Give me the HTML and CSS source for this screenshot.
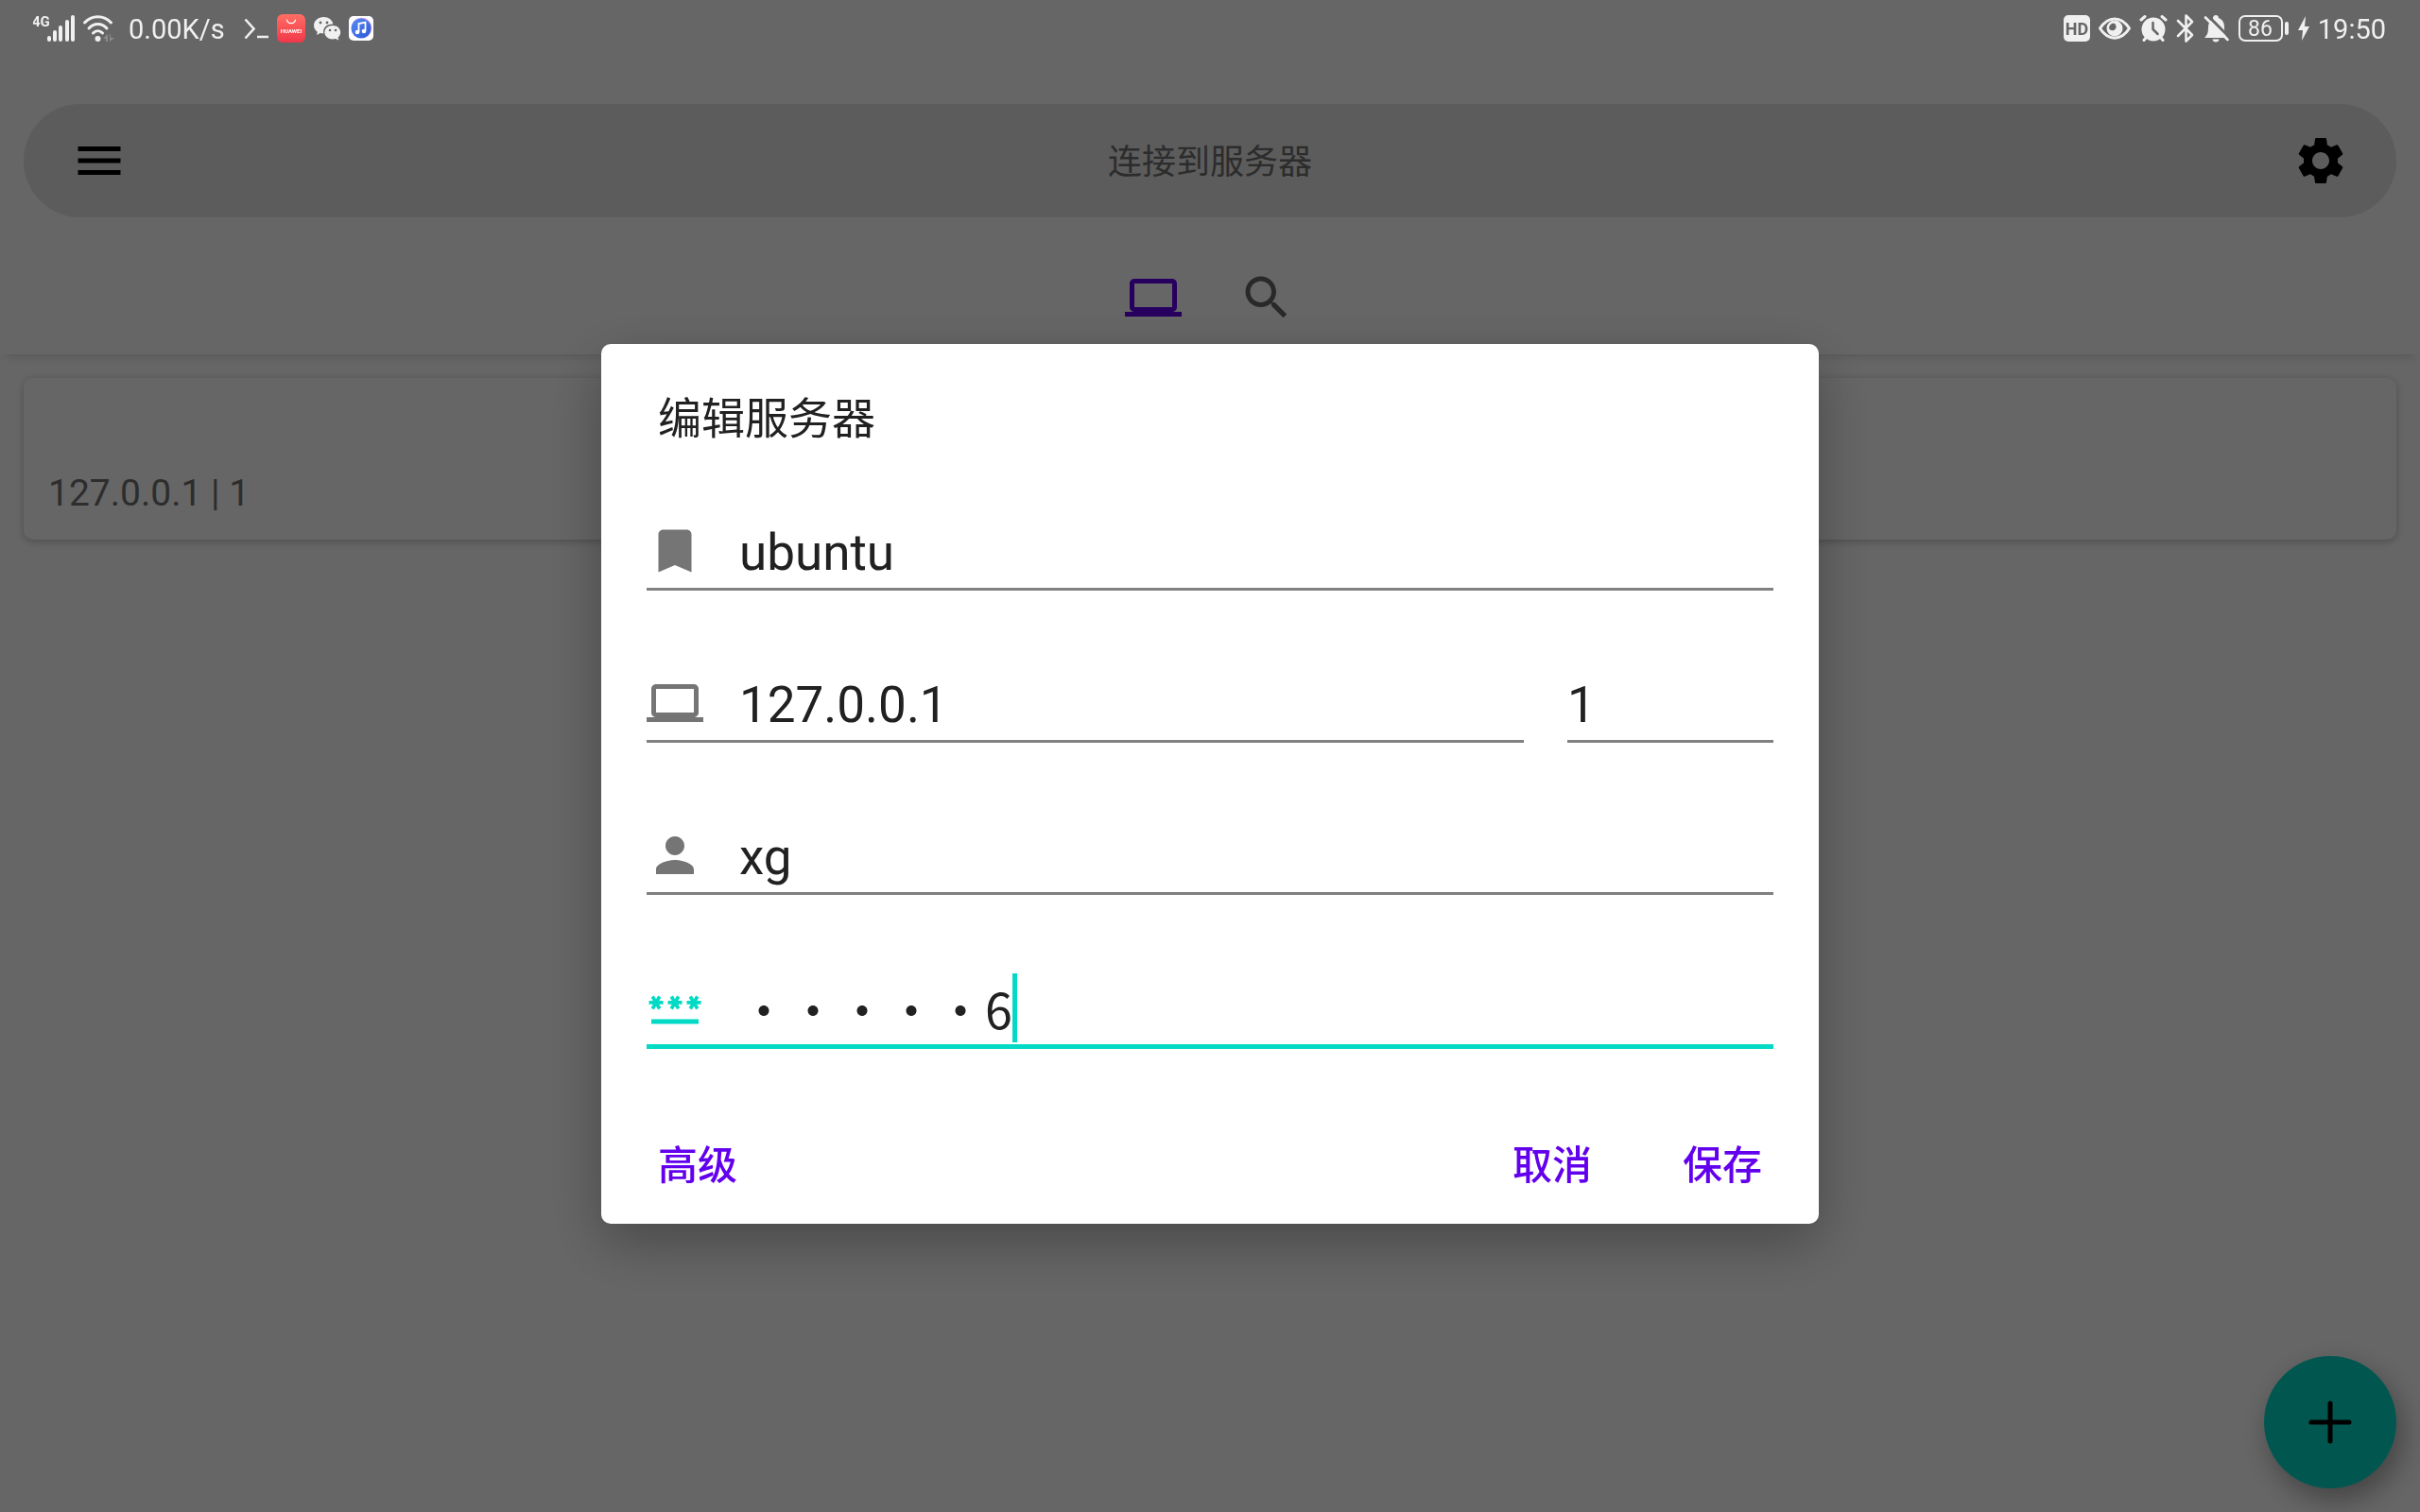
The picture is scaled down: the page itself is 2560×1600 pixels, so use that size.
FILE: index.html
```html
<!DOCTYPE html>
<html lang="zh-CN">
<head>
    <meta charset="UTF-8">
    <meta name="viewport" content="width=device-width, initial-scale=1.0">
    <title>连接到服务器</title>
    <link rel="stylesheet" href="styles.css">
</head>
<body>
    <div class="status-bar">
        <div class="status-left">
            <svg class="status-icon" width="44" height="32" viewBox="35 14 44 32" fill="#f0f0f0">
                <text class="network-type" x="34" y="28">4G</text>
                <rect x="50" y="38" width="4" height="6" rx="2"/>
                <rect x="56" y="32" width="4" height="12" rx="2"/>
                <rect x="62" y="27" width="4" height="17" rx="2"/>
                <rect x="69" y="21" width="4" height="23" rx="2"/>
                <rect x="75" y="16" width="4" height="28" rx="2"/>
            </svg>
            <svg class="status-icon wifi" width="34" height="32" viewBox="87 14 34 32" fill="none" stroke="#f0f0f0" stroke-width="3" stroke-linecap="round">
                <path d="M89.500 24C97 15.500 110 15.500 117.500 24"/>
                <path d="M94 30C99.500 24 107.500 24 113 30"/>
                <path d="M98.500 35C101.500 32 105.500 32 108.500 35"/>
                <circle cx="103.500" cy="41" r="3" fill="#f0f0f0" stroke="none"/>
                <path d="M114 36v8h-2v-3h-3zM116 44v-8h1v4h4z" fill="#8c8c8c" stroke="none"/>
            </svg>
            <span class="status-text speed">0.00K/s</span>
            <svg class="status-icon prompt" width="27" height="32" viewBox="257 14 27 32" fill="none" stroke="#f0f0f0" stroke-width="2.600">
                <path d="M258.500 20.500L267.500 30.500L258.500 40.500M271 39H283"/>
            </svg>
            <svg class="status-icon" width="30" height="32" viewBox="293 14 30 32">
                <defs>
                    <linearGradient id="storeRed" x1="0" y1="0" x2="0" y2="1">
                        <stop offset="0" stop-color="#ff6e63"/>
                        <stop offset="1" stop-color="#f0374a"/>
                    </linearGradient>
                </defs>
                <rect x="293" y="15" width="30" height="30" rx="6" fill="url(#storeRed)"/>
                <path d="M303.500 20.500C304 26 312 26 312.500 20.500" fill="none" stroke="#fff" stroke-width="1.200"/>
                <text class="store-name" x="308" y="34.500" text-anchor="middle">HUAWEI</text>
            </svg>
            <svg class="status-icon" width="30" height="32" viewBox="331 14 30 32" fill="#f0f0f0">
                <path d="M342.500 18C336.500 18 332 22 332 27c0 2.800 1.500 5.200 3.800 6.800L335 37l3.800-2c1.200.3 2.500.5 3.500.5C341 29 346 25 352.500 25.500C351.500 21 347.500 18 342.500 18z"/>
                <path d="M352 27c-5 0-8.600 3.200-8.600 7.200s3.600 7.200 8.600 7.200c1 0 2-.2 2.900-.5l3.500 1.600l-.8-2.900c1.600-1.300 2.600-3.200 2.600-5.400C360.200 30.200 357 27 352 27z"/>
                <circle cx="339" cy="24" r="1.400" fill="#666"/>
                <circle cx="346" cy="24" r="1.400" fill="#666"/>
                <circle cx="349" cy="32" r="1.300" fill="#666"/>
                <circle cx="355" cy="32" r="1.300" fill="#666"/>
            </svg>
            <svg class="status-icon music" width="27" height="32" viewBox="371 14 27 32">
                <defs>
                    <linearGradient id="musicBlue" x1="0" y1="0" x2="1" y2="1">
                        <stop offset="0" stop-color="#5a8cf2"/>
                        <stop offset="1" stop-color="#2c57d8"/>
                    </linearGradient>
                </defs>
                <rect x="371" y="17" width="26" height="26" rx="5" fill="#fff"/>
                <circle cx="384.500" cy="29.500" r="10.800" fill="#d7a4f5"/>
                <circle cx="384" cy="30" r="10.500" fill="url(#musicBlue)"/>
                <path d="M381.500 34V25l7-1.500V32.500" fill="none" stroke="#fff" stroke-width="1.800"/>
                <circle cx="380" cy="34" r="2.300" fill="#fff"/>
                <circle cx="387" cy="33" r="2.300" fill="#fff"/>
            </svg>
        </div>
        <div class="status-right">
            <svg class="status-icon" width="28" height="32" viewBox="0 14 28 32">
                <rect x="0" y="16" width="28" height="28" rx="5" fill="#f0f0f0"/>
                <text class="hd-label" x="14" y="37" text-anchor="middle">HD</text>
            </svg>
            <svg class="status-icon" width="34" height="32" viewBox="0 14 34 32">
                <path d="M1.500 30C10 16.500 24 16.500 32.500 30C24 43.500 10 43.500 1.500 30z" fill="none" stroke="#f0f0f0" stroke-width="3" stroke-linejoin="round"/>
                <circle cx="17" cy="30" r="8.500" fill="#f0f0f0"/>
                <path d="M16 24.500a4 4 0 1 1-5 5.500C11 27 13 24.800 16 24.500z" fill="#666"/>
            </svg>
            <svg class="status-icon" width="30" height="32" viewBox="0 14 30 32" fill="none" stroke="#f0f0f0" stroke-width="3" stroke-linecap="round">
                <circle cx="15" cy="31" r="12.500" fill="#f0f0f0" stroke="none"/>
                <path d="M2 21L6 17.500M28 21L24 17.500M5 42.500L7 40M25 42.500L23 40"/>
                <path d="M14.500 24V31L19.500 36" stroke="#666" stroke-width="2.500"/>
            </svg>
            <svg class="status-icon" width="20" height="32" viewBox="0 14 20 32" fill="none" stroke="#f0f0f0" stroke-width="2.600" stroke-linejoin="round" stroke-linecap="round">
                <path d="M2 22L17 37L10.500 43.500V16.500L17 23L2 38"/>
            </svg>
            <svg class="status-icon" width="28" height="32" viewBox="0 14 28 32" fill="#f0f0f0">
                <path d="M1 40C4 37 5 35 5 29C5 25 6.500 22 10 20V19C10 15 16 15 16 19C20 20.500 22 24 22 29C22 35 23 37 25 40z"/>
                <path d="M9.500 41.500h7C16.500 45.500 9.500 45.500 9.500 41.500z"/>
                <path d="M4 16L28 40" stroke="#666" stroke-width="3"/>
                <path d="M2 18.500L25.500 42" stroke="#f0f0f0" stroke-width="2.600" stroke-linecap="round"/>
            </svg>
            <svg class="status-icon battery" width="54" height="32" viewBox="0 14 54 32">
                <rect x="1" y="17" width="45" height="26" rx="6" fill="none" stroke="#f0f0f0" stroke-width="2"/>
                <rect x="49" y="23" width="4" height="14" rx="2" fill="#f0f0f0"/>
                <text class="battery-level" x="23" y="38" text-anchor="middle">86</text>
            </svg>
            <svg class="status-icon" width="12" height="32" viewBox="0 14 12 32" fill="#f0f0f0">
                <path d="M8 17L0 32H5L4 43L12 28H7z"/>
            </svg>
            <span class="status-text">19:50</span>
        </div>
    </div>

    <header class="app-bar">
        <div class="search-bar">
            <button class="icon-button" type="button" aria-label="菜单">
                <svg class="icon" viewBox="0 0 24 24"><path d="M3 18h18v-2H3v2zm0-5h18v-2H3v2zm0-7v2h18V6H3z"/></svg>
            </button>
            <span class="search-title">连接到服务器</span>
            <button class="icon-button" type="button" aria-label="设置">
                <svg class="icon" viewBox="0 0 24 24"><path d="M19.140 12.940c.04-.3.060-.61.060-.94 0-.32-.02-.64-.07-.94l2.030-1.580c.18-.14.23-.41.120-.61l-1.920-3.320c-.12-.22-.37-.29-.59-.22l-2.390.96c-.5-.38-1.030-.7-1.620-.94l-.36-2.540c-.04-.24-.24-.41-.48-.41h-3.840c-.24 0-.43.17-.47.41l-.36 2.540c-.59.24-1.130.57-1.620.94l-2.390-.96c-.22-.08-.47 0-.59.22L2.740 8.870c-.12.21-.08.47.12.61l2.030 1.580c-.05.3-.09.63-.09.94s.02.64.07.94l-2.030 1.580c-.18.14-.23.41-.12.61l1.920 3.320c.12.22.37.29.59.22l2.390-.96c.5.38 1.030.7 1.620.94l.36 2.540c.05.24.24.41.48.41h3.840c.24 0 .44-.17.47-.41l.36-2.540c.59-.24 1.130-.56 1.620-.94l2.390.96c.22.08.47 0 .59-.22l1.920-3.320c.12-.22.07-.47-.12-.61l-2.010-1.580zM12 15.600c-1.980 0-3.600-1.620-3.600-3.600s1.620-3.600 3.600-3.600 3.600 1.620 3.600 3.600-1.620 3.600-3.600 3.600z"/></svg>
            </button>
        </div>
        <nav class="tabs">
            <a class="tab active" href="#servers" aria-label="服务器">
                <svg class="icon" viewBox="0 0 24 24"><path d="M20 18c1.100 0 2-.9 2-2V6c0-1.100-.9-2-2-2H4c-1.100 0-2 .9-2 2v10c0 1.100.9 2 2 2H0v2h24v-2h-4zM4 6h16v10H4V6z"/></svg>
            </a>
            <a class="tab" href="#discover" aria-label="搜索">
                <svg class="icon" viewBox="0 0 24 24"><path d="M15.500 14h-.79l-.28-.27C15.410 12.590 16 11.110 16 9.500 16 5.910 13.090 3 9.500 3S3 5.910 3 9.500 5.910 16 9.500 16c1.610 0 3.090-.59 4.230-1.570l.27.280v.79l5 4.990L20.490 19l-4.990-5zm-6 0C7.010 14 5 11.990 5 9.500S7.010 5 9.500 5 14 7.010 14 9.500 11.990 14 9.500 14z"/></svg>
            </a>
        </nav>
    </header>

    <main class="server-list">
        <div class="server-card">127.0.0.1 | 1</div>
    </main>

    <button class="fab" type="button" aria-label="添加服务器">
        <svg class="icon" viewBox="0 0 24 24"><path d="M12 4v16M4 12h16" fill="none" stroke="#000" stroke-width="2" stroke-linecap="round"/></svg>
    </button>

    <div class="scrim">
        <form class="dialog" role="dialog" aria-labelledby="dialogTitle">
            <h2 class="dialog-title" id="dialogTitle">编辑服务器</h2>
            <div class="fields">
                <div class="field">
                    <label for="serverName" aria-label="名称">
                        <svg class="icon" viewBox="0 0 24 24"><path d="M17 3H7c-1.100 0-2 .9-2 2v16l7-3 7 3V5c0-1.100-.9-2-2-2z"/></svg>
                    </label>
                    <input type="text" id="serverName" value="ubuntu">
                </div>
                <div class="field-row">
                    <div class="field">
                        <label for="host" aria-label="主机">
                            <svg class="icon" viewBox="0 0 24 24"><path d="M20 18c1.100 0 2-.9 2-2V6c0-1.100-.9-2-2-2H4c-1.100 0-2 .9-2 2v10c0 1.100.9 2 2 2H0v2h24v-2h-4zM4 6h16v10H4V6z"/></svg>
                        </label>
                        <input type="text" id="host" value="127.0.0.1">
                    </div>
                    <div class="field port">
                        <input type="text" id="port" value="1" aria-label="端口">
                    </div>
                </div>
                <div class="field">
                    <label for="username" aria-label="用户名">
                        <svg class="icon" viewBox="0 0 24 24"><path d="M12 12c2.210 0 4-1.790 4-4s-1.790-4-4-4-4 1.790-4 4 1.790 4 4 4zm0 2c-2.670 0-8 1.340-8 4v2h16v-2c0-2.660-5.330-4-8-4z"/></svg>
                    </label>
                    <input type="text" id="username" value="xg">
                </div>
                <div class="field focused">
                    <label for="password" aria-label="密码">
                        <svg class="icon" viewBox="0 0 24 24"><path d="M2 17h20v2H2v-2zm1.150-4.050L4 11.470l.85 1.480 1.300-.75-.85-1.480H7v-1.500H5.300l.85-1.470L4.850 7 4 8.470 3.150 7l-1.300.75.85 1.470H1v1.500h1.700l-.85 1.480 1.300.75zm6.700-.75l1.300.75.85-1.480.85 1.480 1.300-.75-.85-1.480H15v-1.500h-1.700l.85-1.470-1.300-.75L12 8.470 11.150 7l-1.300.75.85 1.470H9v1.500h1.700l-.85 1.480zM23 9.220h-1.700l.85-1.470-1.300-.75L20 8.470 19.150 7l-1.300.75.85 1.470H17v1.500h1.700l-.85 1.480 1.300.75.85-1.480.85 1.480 1.300-.75-.85-1.480H23v-1.500z"/></svg>
                    </label>
                    <input class="password-input" type="text" id="password" value="•••••6">
                    <span class="caret"></span>
                </div>
            </div>
            <div class="actions">
                <button class="text-button" type="button">高级</button>
                <button class="text-button push" type="button">取消</button>
                <button class="text-button" type="submit">保存</button>
            </div>
        </form>
    </div>
</body>
</html>
```
FILE: styles.css
```css
* {
    box-sizing: border-box;
}
body {
    margin: 0;
    min-height: 100vh;
    font-family: Roboto, "Noto Sans CJK SC", sans-serif;
    background-color: #fff;
    color: #212121;
    overflow: hidden;
}
button {
    padding: 0;
    border: none;
    background: none;
    font-family: inherit;
    cursor: pointer;
}
.icon {
    display: block;
    width: 60px;
    height: 60px;
    fill: currentColor;
}

/* status bar stays bright above the scrim */
.status-bar {
    position: relative;
    z-index: 3;
    display: flex;
    justify-content: space-between;
    height: 60px;
    padding: 0 36px 0 35px;
    color: #f0f0f0;
}
.status-left, .status-right {
    display: flex;
    align-items: center;
    gap: 8px;
}
.status-right {
    gap: 9px;
}
.status-icon {
    display: block;
    flex: none;
}
.status-text {
    font-size: 29px;
    line-height: 32px;
    padding-top: 2px;
}
.speed {
    margin: 0 12px 0 7px;
}
.network-type {
    font-size: 15px;
    font-weight: bold;
}
.store-name {
    font-size: 6px;
    font-weight: bold;
    fill: #fff;
}
.hd-label {
    font-size: 18px;
    font-weight: bold;
    fill: #666;
}
.battery-level {
    font-size: 23px;
    fill: #f0f0f0;
}

/* top bar */
.app-bar {
    padding: 50px 25px 0;
    box-shadow: 0 8px 10px -6px rgba(0, 0, 0, 0.16);
}
.search-bar {
    display: flex;
    align-items: center;
    justify-content: space-between;
    height: 120px;
    padding: 0 50px;
    border-radius: 60px;
    background-color: #e6e6e6;
}
.icon-button {
    color: #000;
}
.search-title {
    padding-top: 4px;
    font-size: 36px;
    line-height: 44px;
    color: #6e6e6e;
}
.tabs {
    display: flex;
    justify-content: center;
    margin-top: 25px;
}
.tab {
    display: flex;
    align-items: center;
    justify-content: center;
    width: 120px;
    height: 120px;
    color: #666;
}
.tab.active {
    color: #6200ee;
}

/* server list */
.server-list {
    padding: 25px;
}
.server-card {
    padding: 99px 26px 25px;
    border-radius: 10px;
    box-shadow: 0 2px 8px rgba(0, 0, 0, 0.24);
    font-size: 39px;
    line-height: 47px;
    color: #727272;
}
.fab {
    position: fixed;
    right: 25px;
    bottom: 25px;
    display: flex;
    align-items: center;
    justify-content: center;
    width: 140px;
    height: 140px;
    border-radius: 50%;
    background-color: #03dac5;
    box-shadow: 6px 12px 30px rgba(0, 0, 0, 0.35);
}

/* dialog */
.scrim {
    position: fixed;
    inset: 0;
    z-index: 2;
    display: flex;
    align-items: center;
    justify-content: center;
    padding-top: 58px;
    background-color: rgba(0, 0, 0, 0.6);
}
.dialog {
    width: 100%;
    max-width: 1288px;
    padding: 49px 40px 20px;
    border-radius: 10px;
    background-color: #fff;
    box-shadow: 0 20px 60px rgba(0, 0, 0, 0.3);
}
.dialog-title {
    margin: 0 20px;
    font-size: 46px;
    font-weight: normal;
    line-height: 60px;
}
.fields {
    display: grid;
    grid-template-columns: minmax(0, 1fr);
    grid-auto-rows: 80px;
    align-items: start;
    gap: 81px;
    margin: 74px 8px 0;
}
.field-row {
    display: flex;
    gap: 46px;
}
.field {
    display: flex;
    align-items: center;
    flex: 1;
    gap: 38px;
    min-width: 0;
    padding-bottom: 2px;
    border-bottom: 3px solid #808080;
    color: #757575;
}
.field.port {
    flex: 0 0 218px;
}
.field input {
    flex: 1;
    min-width: 0;
    height: 73px;
    padding: 4px 0 0;
    border: none;
    outline: none;
    background: none;
    font-family: inherit;
    font-size: 53px;
    color: #212121;
}
.field.focused {
    border-bottom: 5px solid #03dac5;
    color: #03dac5;
}
.field .password-input {
    flex: none;
    field-sizing: content;
    padding: 0;
    font-family: "Noto Sans CJK SC", sans-serif;
    font-size: 52px;
}
.caret {
    width: 5px;
    height: 73px;
    margin-left: -38px;
    background-color: #03dac5;
}
.actions {
    display: flex;
    gap: 56px;
    margin-top: 75px;
}
.text-button {
    height: 90px;
    padding: 0 20px;
    font-size: 42px;
    font-weight: 500;
    color: #6200ee;
}
.text-button.push {
    margin-left: auto;
}
```
